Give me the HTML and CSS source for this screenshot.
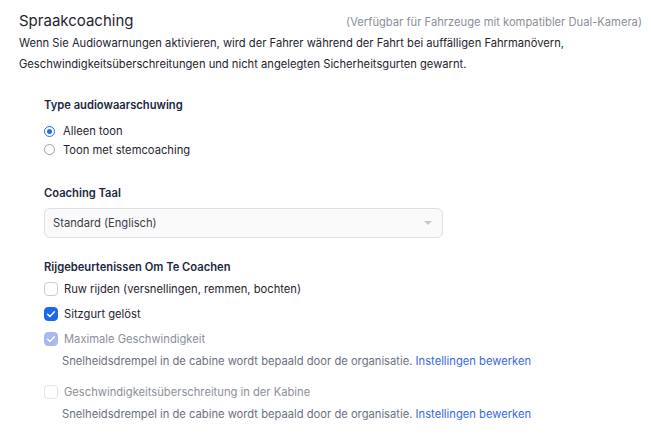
FILE: index.html
```html
<!DOCTYPE html>
<html lang="nl">
<head>
    <meta charset="UTF-8">
    <title>Spraakcoaching</title>
    <link rel="stylesheet" href="styles.css">
</head>
<body>
    <div class="panel">
        <div class="panel-head">
            <h2>Spraakcoaching</h2>
            <span class="note">(Verfügbar für Fahrzeuge mit kompatibler Dual-Kamera)</span>
        </div>
        <p class="desc">Wenn Sie Audiowarnungen aktivieren, wird der Fahrer während der Fahrt bei auffälligen Fahrmanövern,<br>Geschwindigkeitsüberschreitungen und nicht angelegten Sicherheitsgurten gewarnt.</p>

        <div class="section">
            <h3>Type audiowaarschuwing</h3>
            <div class="radios">
                <label class="radio"><span class="dot on"></span>Alleen toon</label>
                <label class="radio"><span class="dot"></span>Toon met stemcoaching</label>
            </div>
        </div>

        <div class="section">
            <h3>Coaching Taal</h3>
            <div class="select">
                <span>Standard (Englisch)</span>
                <span class="caret"></span>
            </div>
        </div>

        <div class="section events">
            <h3>Rijgebeurtenissen Om Te Coachen</h3>
            <div class="checks">
                <label class="check"><span class="box"></span>Ruw rijden (versnellingen, remmen, bochten)</label>
                <label class="check"><span class="box on"><svg viewBox="0 0 14 14"><path d="M3.6 7.2l2.3 2.2 4.5-4.6" fill="none" stroke="#fff" stroke-width="1.5" stroke-linecap="round" stroke-linejoin="round"/></svg></span>Sitzgurt gelöst</label>
                <div class="item">
                    <label class="check disabled"><span class="box on"><svg viewBox="0 0 14 14"><path d="M3.6 7.2l2.3 2.2 4.5-4.6" fill="none" stroke="#fff" stroke-width="1.5" stroke-linecap="round" stroke-linejoin="round"/></svg></span>Maximale Geschwindigkeit</label>
                    <p class="hint">Snelheidsdrempel in de cabine wordt bepaald door de organisatie. <a href="#">Instellingen bewerken</a></p>
                </div>
                <div class="item">
                    <label class="check disabled"><span class="box"></span>Geschwindigkeitsüberschreitung in der Kabine</label>
                    <p class="hint">Snelheidsdrempel in de cabine wordt bepaald door de organisatie. <a href="#">Instellingen bewerken</a></p>
                </div>
            </div>
        </div>
    </div>
</body>
</html>
```

FILE: styles.css
```css
body {
    margin: 0;
    font-family: Inter, "Noto Sans", sans-serif;
    color: #1f2430;
    background: #fff;
}
.panel {
    padding: 9px 9px 0 19px;
}
.panel-head {
    display: flex;
    justify-content: space-between;
    align-items: baseline;
}
.panel-head h2 {
    margin: 0;
    font-size: 15px;
    font-weight: 400;
    line-height: 24px;
    color: #1f2430;
}
.note {
    font-size: 11.2px;
    color: #8a8f99;
}
.desc {
    margin: 0;
    font-size: 11.2px;
    line-height: 21px;
}
.section {
    padding-left: 25px;
    margin-top: 21px;
}
.section + .section {
    margin-top: 25px;
}
.section.events {
    margin-top: 20px;
}
.section h3 {
    margin: 0;
    font-size: 11.2px;
    font-weight: 600;
    line-height: 18px;
    color: #1b2841;
}
.radios {
    margin-top: 8px;
    display: flex;
    flex-direction: column;
}
.radio {
    display: flex;
    align-items: center;
    font-size: 11.2px;
    line-height: 18.5px;
}
.dot {
    width: 9px;
    height: 9px;
    border: 1px solid #9aa0aa;
    border-radius: 50%;
    margin: 0 8px 0 0;
    box-sizing: content-box;
    position: relative;
}
.dot.on {
    border-color: #1f6ff2;
}
.dot.on::after {
    content: "";
    position: absolute;
    left: 2px;
    top: 2px;
    width: 5px;
    height: 5px;
    border-radius: 50%;
    background: #1f6ff2;
}
.select {
    margin-top: 6px;
    width: 399px;
    height: 30px;
    box-sizing: border-box;
    border: 1px solid #dcdfe4;
    border-radius: 6px;
    background: #fafafb;
    display: flex;
    align-items: center;
    justify-content: space-between;
    padding: 0 10px 0 8px;
    font-size: 11.2px;
    color: #3b404a;
}
.caret {
    width: 0;
    height: 0;
    border-left: 4px solid transparent;
    border-right: 4px solid transparent;
    border-top: 4px solid #c3c7ce;
}
.checks {
    margin-top: 4px;
    display: flex;
    flex-direction: column;
    gap: 7px;
}
.check {
    display: flex;
    align-items: center;
    font-size: 11.2px;
    line-height: 18px;
    color: #1f2430;
}
.check.disabled {
    color: #8b9099;
}
.box {
    width: 14px;
    height: 14px;
    box-sizing: border-box;
    border: 1px solid #c9cdd4;
    border-radius: 4px;
    margin-right: 6px;
    display: flex;
}
.box svg {
    width: 14px;
    height: 14px;
    margin: -1px;
}
.box.on {
    background: #1a68f0;
    border-color: #1a68f0;
}
.disabled .box {
    border-color: #e3e5e9;
}
.disabled .box.on {
    background: #a9b7f2;
    border-color: #a9b7f2;
}
.hint {
    margin: 4px 0 0 18px;
    font-size: 11.2px;
    line-height: 18px;
    color: #6b7180;
}
.hint a {
    color: #3569e6;
    text-decoration: none;
}
.item + .item {
    margin-top: 6px;
}
```
